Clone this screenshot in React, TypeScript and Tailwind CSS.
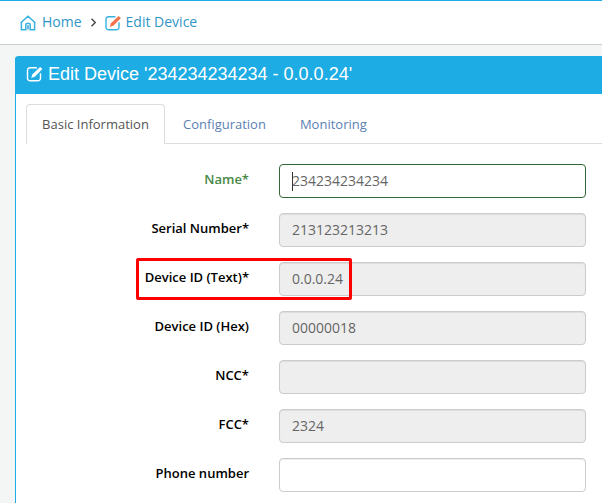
import React from 'react';

type IconProps = { frame: string; pen: string; className: string };

function EditIcon({ frame, pen, className }: IconProps) {
  return (
    <svg viewBox="0 0 16 16" className={className} fill="none">
      <path
        d="M10.4 1.8H3.6A2.6 2.6 0 0 0 1 4.4v7.8a2.6 2.6 0 0 0 2.6 2.6h7.8a2.6 2.6 0 0 0 2.6-2.6V7.2"
        stroke={frame}
        strokeWidth="1.4"
      />
      <path d="M13.6 1 15.9 3 8.6 10.4 4.7 12 6 8.3Z" fill={pen} />
    </svg>
  );
}

function HomeIcon() {
  return (
    <svg viewBox="0 0 16 16" className="mt-px h-4 w-4 shrink-0" fill="none" stroke="#35b2df" strokeWidth="1.5">
      <path d="M.6 8 8 1.2 15.4 8M1.4 7.2v7.5h4.4V9.4a1 1 0 0 1 1-1h2.4a1 1 0 0 1 1 1v5.3h4.4V7.2" />
      <path d="M8 10.2v4.4" stroke="#4aa5cc" strokeWidth="1.6" />
    </svg>
  );
}

type Field = { label: string; value: string; kind: 'focus' | 'readonly' | 'empty'; marked?: boolean };

const fields: Field[] = [
  { label: 'Name*', value: '234234234234', kind: 'focus' },
  { label: 'Serial Number*', value: '213123213213', kind: 'readonly' },
  { label: 'Device ID (Text)*', value: '0.0.0.24', kind: 'readonly', marked: true },
  { label: 'Device ID (Hex)', value: '00000018', kind: 'readonly' },
  { label: 'NCC*', value: '', kind: 'readonly' },
  { label: 'FCC*', value: '2324', kind: 'readonly' },
  { label: 'Phone number', value: '', kind: 'empty' },
];

const boxStyles = {
  focus: 'border-[#356635] bg-white',
  readonly: 'border-[#cccccc] bg-[#eeeeee] shadow-[inset_0_1px_1px_rgba(0,0,0,0.075)]',
  empty: 'border-[#cccccc] bg-white shadow-[inset_0_1px_1px_rgba(0,0,0,0.075)]',
};

export default function App() {
  return (
    <div className="flex h-[503px] w-[602px] flex-col overflow-hidden bg-[#f4f6f6] font-['Open_Sans',sans-serif]">
      <nav className="flex h-[45px] shrink-0 items-center border-t border-b border-t-[#1caee4] border-b-[#c9cfd0] bg-white pb-px pl-5 text-sm text-[#2f96c5]">
        <HomeIcon />
        <a className="ml-[6px]">Home</a>
        <svg viewBox="0 0 6 10" className="ml-[8px] h-[9px] w-[7px]" fill="none" stroke="#444444" strokeWidth="1.5">
          <path d="m.8 .8 4.2 4.2-4.2 4.2" />
        </svg>
        <EditIcon frame="#35b2df" pen="#f2704a" className="mt-px ml-[8px] h-4 w-4 shrink-0" />
        <a className="ml-[5px]">Edit Device</a>
      </nav>

      <section className="mt-[11px] ml-[15px] flex flex-1 flex-col rounded-tl border-l border-[#1caee4] bg-white">
        <header className="-ml-px flex h-[38px] shrink-0 items-center rounded-tl bg-[#1dace3] pb-[2px] pl-[11px] text-white">
          <EditIcon frame="#ffffff" pen="#ffffff" className="h-4 w-[17px] shrink-0" />
          <h1 className="ml-[5px] font-['Liberation_Sans',sans-serif] text-[18px] leading-6 whitespace-nowrap">
            Edit Device '234234234234 - 0.0.0.24'
          </h1>
        </header>

        <div className="mt-[10px] flex h-10 shrink-0 pl-[10px] text-[13px] text-[#5b7fb4]">
          <div className="flex w-[139px] items-center justify-center rounded-t border border-b-0 border-[#dddddd] text-[#555555]">
            Basic Information
          </div>
          <div className="flex flex-1 items-center gap-[34px] border-b border-[#dddddd] pt-[2px] pl-[18px]">
            <span>Configuration</span>
            <span>Monitoring</span>
          </div>
        </div>

        <form className="mt-5 flex flex-col gap-[15px]">
          {fields.map((field) => (
            <div key={field.label} className="relative flex h-[34px] shrink-0">
              <label
                className={`w-[233px] pt-[6px] text-right text-[13px] leading-[18px] font-semibold ${
                  field.kind === 'focus' ? 'text-[#468847]' : 'text-black'
                }`}
              >
                {field.label}
              </label>
              <div
                className={`ml-[30px] flex w-[307px] items-center rounded border pl-3 text-sm text-[#666666] ${boxStyles[field.kind]}`}
              >
                {field.kind === 'focus' && <span className="-mr-px h-[19px] w-px bg-[#333333]" />}
                {field.value}
              </div>
              {field.marked && (
                <div className="absolute -top-1 left-[120px] h-[42px] w-[216px] rounded-[2px] border-3 border-[#ff0000]" />
              )}
            </div>
          ))}
        </form>
      </section>
    </div>
  );
}
